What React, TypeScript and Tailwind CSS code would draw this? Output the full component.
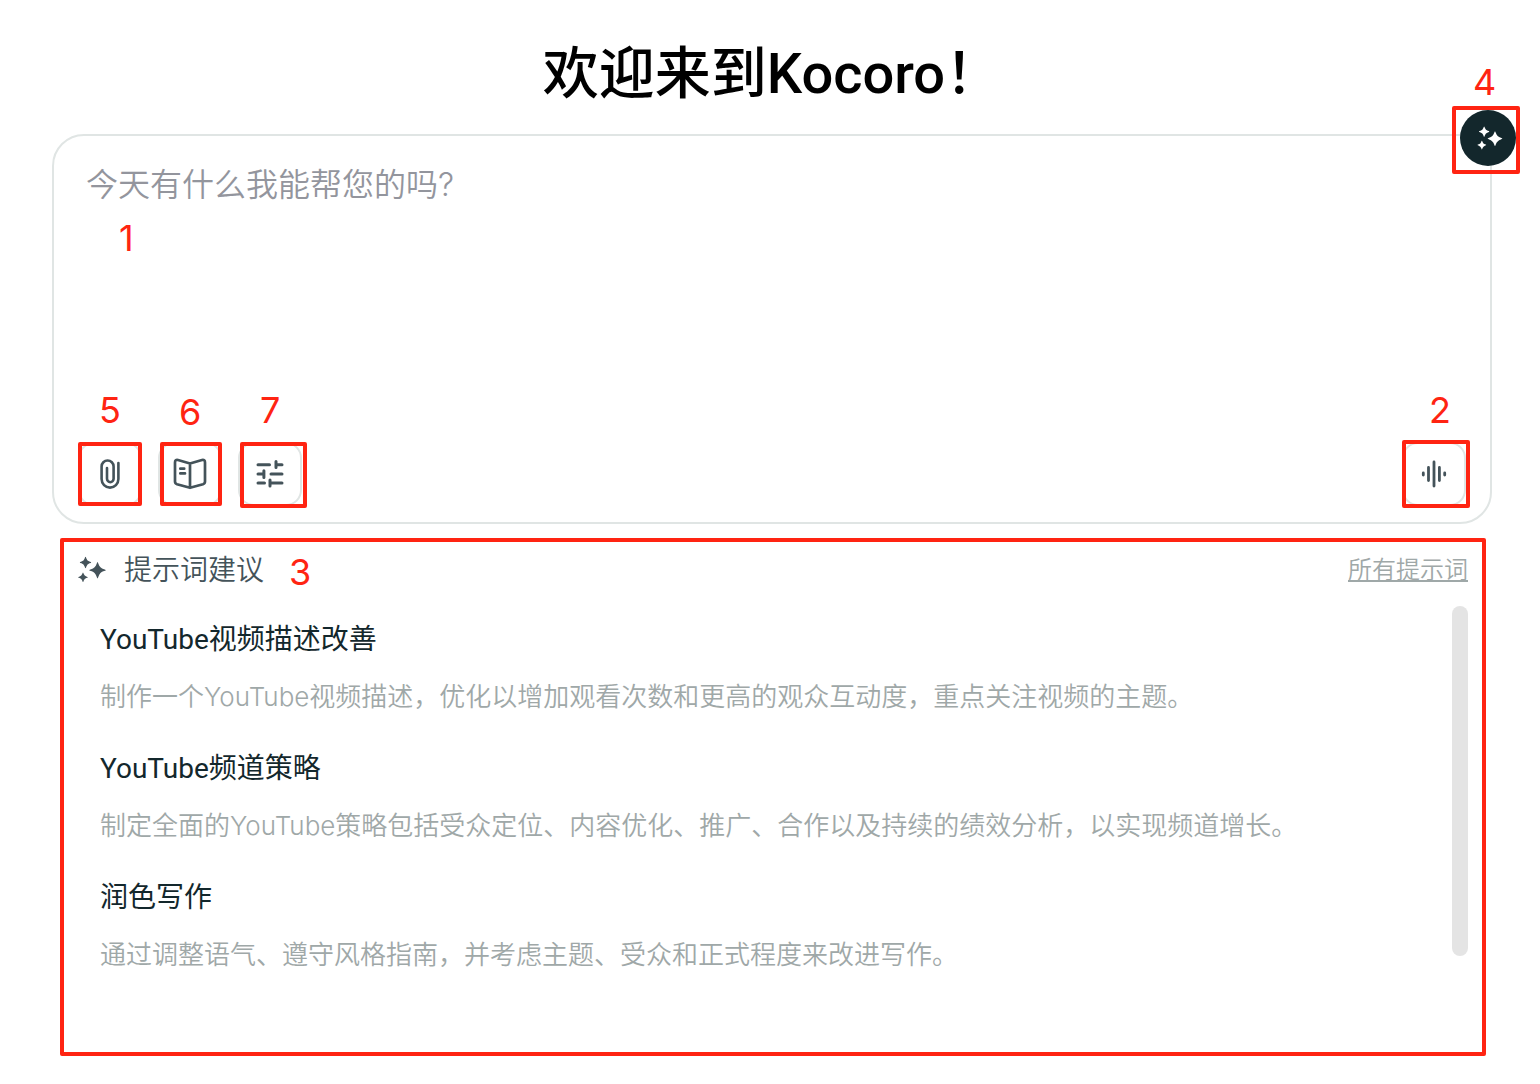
import type { ReactNode } from 'react';

const prompts = [
  {
    title: 'YouTube视频描述改善',
    description: '制作一个YouTube视频描述，优化以增加观看次数和更高的观众互动度，重点关注视频的主题。',
  },
  {
    title: 'YouTube频道策略',
    description: '制定全面的YouTube策略包括受众定位、内容优化、推广、合作以及持续的绩效分析，以实现频道增长。',
  },
  {
    title: '润色写作',
    description: '通过调整语气、遵守风格指南，并考虑主题、受众和正式程度来改进写作。',
  },
];

const SparklesIcon = ({ className }: { className: string }) => (
  <svg viewBox="0 0 32 32" fill="currentColor" className={className} aria-hidden="true">
    <path d="M21.7 8.2Q22 8.2 22.6 10Q24 14.3 28.4 15.8Q30.2 16.3 30.2 16.7Q30.2 17.1 28.4 17.6Q24 19 22.6 23.4Q22 25.2 21.7 25.2Q21.4 25.2 20.8 23.4Q19.4 19 15 17.6Q13.2 17.1 13.2 16.7Q13.2 16.3 15 15.8Q19.4 14.3 20.8 10Q21.4 8.2 21.7 8.2Z" />
    <path d="M9.3 2.8Q9.8 2.8 10.2 4.6Q11 7 13.4 7.8Q15.2 8.2 15.2 8.7Q15.2 9.2 13.4 9.6Q11 10.4 10.2 12.8Q9.8 14.6 9.3 14.6Q8.8 14.6 8.4 12.8Q7.6 10.4 5.2 9.6Q3.4 9.2 3.4 8.7Q3.4 8.2 5.2 7.8Q7.6 7 8.4 4.6Q8.8 2.8 9.3 2.8Z" />
    <path d="M6.7 19Q7.1 19 7.5 20.6Q8.2 22.5 10.1 23.2Q11.7 23.6 11.7 24Q11.7 24.4 10.1 24.8Q8.2 25.5 7.5 27.4Q7.1 29 6.7 29Q6.3 29 5.9 27.4Q5.2 25.5 3.3 24.8Q1.7 24.4 1.7 24Q1.7 23.6 3.3 23.2Q5.2 22.5 5.9 20.6Q6.3 19 6.7 19Z" />
  </svg>
);

const ClipIcon = () => (
  <svg viewBox="0 0 32 32" fill="none" stroke="currentColor" strokeWidth="2.6" strokeLinecap="round" className="size-8" aria-hidden="true">
    <path d="M24.4 5V21A8.4 8.6 0 0 1 7.6 21V8.5A6 6 0 0 1 19.6 8.5V20.8A3.3 3.4 0 0 1 13 20.8V10" />
  </svg>
);

const BookIcon = () => (
  <svg viewBox="0 0 32 32" fill="none" stroke="currentColor" strokeWidth="2.7" strokeLinecap="round" strokeLinejoin="round" className="size-8 overflow-visible" aria-hidden="true">
    <path d="M16 5.5L4 2Q1 1.4 1 4.5V23.5Q1 25.5 3 26.2L16 29.8L29 26.2Q31 25.5 31 23.5V4.5Q31 1.4 28 2ZV29.5" />
    <path d="M6.3 10.7H10.2M6.3 15.4H11" />
  </svg>
);

const SlidersIcon = () => (
  <svg viewBox="0 0 32 32" fill="none" stroke="currentColor" strokeWidth="3" strokeLinecap="round" className="size-8" aria-hidden="true">
    <path d="M4 6.7H15.5M22 3.5V9.5M22 6.7H28" />
    <path d="M4 16H9.5M9.9 12.7V19.5M17 16H28" />
    <path d="M4 25H10.5M16 22V28M16 25H28" />
  </svg>
);

const VoiceIcon = () => (
  <svg viewBox="0 0 32 32" fill="none" stroke="currentColor" strokeWidth="2.8" strokeLinecap="round" className="size-8" aria-hidden="true">
    <path d="M5.3 15V17M10.5 9.5V22.5M16 4V28M21.4 9.5V22.5M26.7 15V17" />
  </svg>
);

const Callout = ({ n, frame, place }: { n: number; frame?: string; place: string }) => (
  <>
    {frame && <span className={`pointer-events-none absolute rounded-xs border-4 border-[#ff2412] ${frame}`} />}
    <span className={`pointer-events-none absolute text-4xl leading-9 text-[#ff2412] ${place}`}>{n}</span>
  </>
);

const ToolButton = ({ label, icon, children }: { label: string; icon: ReactNode; children: ReactNode }) => (
  <div className="relative size-16">
    <button
      type="button"
      aria-label={label}
      className="flex size-16 items-center justify-center rounded-2xl border-2 border-[#e0e5e4] text-[#44535a]"
    >
      {icon}
    </button>
    {children}
  </div>
);

const App = () => {
  return (
    <main className="min-h-screen bg-white pr-12 pl-[52px] font-['Inter','Noto_Sans_CJK_SC',sans-serif]">
      <h1 className="pt-8 text-center font-['Roboto','Noto_Sans_CJK_SC',sans-serif] text-[56px] leading-[84px] font-medium text-black">
        欢迎来到Kocoro！
      </h1>

      <div className="relative mt-[18px] rounded-[32px] border-2 border-[#e0e5e4] px-6 pt-6 pb-4">
        <textarea
          aria-label="消息"
          placeholder="今天有什么我能帮您的吗?"
          className="block h-[282px] w-full resize-none px-2 text-[32px] leading-[50px] font-[350] outline-none placeholder:text-[#93959d]"
        />
        <Callout n={1} place="top-[84px] left-[65px]" />

        <div className="flex gap-4">
          <ToolButton label="附件" icon={<ClipIcon />}>
            <Callout n={5} frame="inset-0" place="-top-[50px] left-[21px]" />
          </ToolButton>
          <ToolButton label="知识库" icon={<BookIcon />}>
            <Callout n={6} frame="top-0 right-0 bottom-0 left-0.5" place="-top-12 left-[21px]" />
          </ToolButton>
          <ToolButton label="设置" icon={<SlidersIcon />}>
            <Callout n={7} frame="top-0 -right-[5px] -bottom-0.5 left-0.5" place="-top-[50px] left-[22px]" />
          </ToolButton>
          <div className="ml-auto">
            <ToolButton label="语音" icon={<VoiceIcon />}>
              <Callout n={2} frame="-top-0.5 -right-1 -bottom-0.5 left-0" place="-top-[50px] left-[27px]" />
            </ToolButton>
          </div>
        </div>

        <div className="absolute -top-[26px] -right-[26px]">
          <button
            type="button"
            aria-label="提示词"
            className="flex size-14 items-center justify-center rounded-full bg-[#13272c] pl-1 text-white"
          >
            <SparklesIcon className="size-7" />
          </button>
          <Callout n={4} frame="-top-1 -right-1 -bottom-2 -left-2" place="-top-[46px] left-[13px]" />
        </div>
      </div>

      <section className="mt-3.5 mr-1.5 ml-2 rounded-xs border-4 border-[#ff2412] px-3.5">
        <header className="flex h-14 items-center">
          <SparklesIcon className="-ml-0.5 size-8 pb-px text-[#44535a]" />
          <h2 className="ml-4 text-[28px] leading-[42px] font-[350] text-[#44535a]">提示词建议</h2>
          <span className="ml-[25px] pt-1 text-4xl leading-9 text-[#ff2412]">3</span>
          <a href="#prompts" className="ml-auto text-2xl leading-9 font-[350] text-[#9fa8a8] underline">
            所有提示词
          </a>
        </header>

        <div id="prompts" className="mt-2 flex items-start justify-between">
          <ul className="flex flex-col gap-8 pt-[13px] pb-[78px] pl-[22px]">
            {prompts.map((prompt) => (
              <li key={prompt.title}>
                <h3 className="font-['Roboto','Noto_Sans_CJK_SC',sans-serif] text-[28px] leading-[42px] text-[#13272c]">
                  {prompt.title}
                </h3>
                <p className="mt-4 text-[26px] leading-[39px] font-[350] text-[#9fa8a8]">{prompt.description}</p>
              </li>
            ))}
          </ul>
          <div className="h-[350px] w-4 shrink-0 rounded-full bg-[#e4e4e4]" />
        </div>
      </section>
    </main>
  );
};

export default App;
